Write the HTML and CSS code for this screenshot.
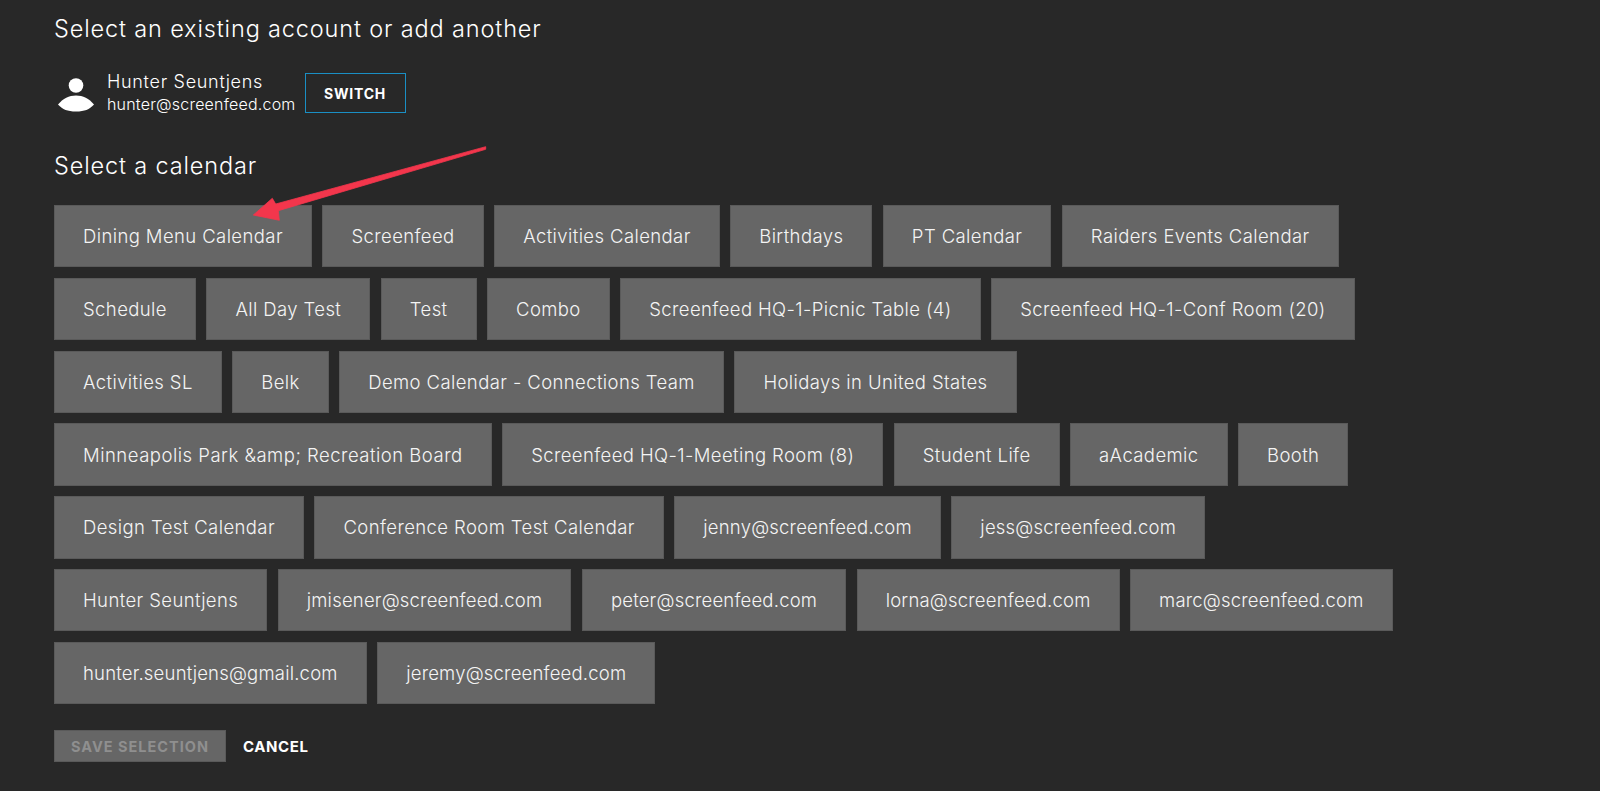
FILE: index.html
```html
<!DOCTYPE html>
<html lang="en">
<head>
<meta charset="utf-8">
<title>Select a calendar</title>
<link rel="stylesheet" href="styles.css">
</head>
<body>
<main class="page">
  <h2 class="title first">Select an existing account or add another</h2>
  <div class="account">
    <svg class="avatar" width="36" height="34" viewBox="0 0 36 34"><circle cx="18" cy="7.500" r="7.300" fill="#fff"/><path d="M0 26.500C5 20.500 11 17.500 18 17.500s13 3 18 9C31 31.500 27 33.500 18 33.500S5 31.500 0 26.500Z" fill="#fff"/></svg>
    <div class="who">
      <div class="name">Hunter Seuntjens</div>
      <div class="email">hunter@screenfeed.com</div>
    </div>
    <button class="switch">SWITCH</button>
  </div>
  <h2 class="title second">Select a calendar</h2>
  <div class="calendars">
    <button class="cal">Dining Menu Calendar</button>
    <button class="cal">Screenfeed</button>
    <button class="cal">Activities Calendar</button>
    <button class="cal">Birthdays</button>
    <button class="cal">PT Calendar</button>
    <button class="cal">Raiders Events Calendar</button>
    <button class="cal">Schedule</button>
    <button class="cal">All Day Test</button>
    <button class="cal">Test</button>
    <button class="cal">Combo</button>
    <button class="cal">Screenfeed HQ-1-Picnic Table (4)</button>
    <button class="cal">Screenfeed HQ-1-Conf Room (20)</button>
    <button class="cal">Activities SL</button>
    <button class="cal">Belk</button>
    <button class="cal">Demo Calendar - Connections Team</button>
    <button class="cal">Holidays in United States</button>
    <button class="cal wide">Minneapolis Park &amp;amp; Recreation Board</button>
    <button class="cal">Screenfeed HQ-1-Meeting Room (8)</button>
    <button class="cal">Student Life</button>
    <button class="cal">aAcademic</button>
    <button class="cal">Booth</button>
    <button class="cal">Design Test Calendar</button>
    <button class="cal">Conference Room Test Calendar</button>
    <button class="cal mail">jenny@screenfeed.com</button>
    <button class="cal mail">jess@screenfeed.com</button>
    <button class="cal">Hunter Seuntjens</button>
    <button class="cal mail">jmisener@screenfeed.com</button>
    <button class="cal mail">peter@screenfeed.com</button>
    <button class="cal mail">lorna@screenfeed.com</button>
    <button class="cal mail">marc@screenfeed.com</button>
    <button class="cal mail">hunter.seuntjens@gmail.com</button>
    <button class="cal mail">jeremy@screenfeed.com</button>
  </div>
  <div class="actions">
    <button class="save" disabled>SAVE SELECTION</button>
    <button class="cancel">CANCEL</button>
  </div>
</main>
<svg class="arrow" width="240" height="80" viewBox="0 0 240 80"><path d="M234.700 0.700L24.700 58L21.300 52.300L2.300 69L28.300 74.300L27.300 64.700L234.700 3.300Z" fill="#f3364c" stroke="#f3364c" stroke-width="0.800" stroke-linejoin="round"/></svg>
</body>
</html>
```
FILE: styles.css
```css
* { box-sizing: border-box; }
html, body { margin: 0; height: 100%; }
body {
  background: #282828;
  color: #fff;
  font-family: Inter, "Noto Sans", sans-serif;
  overflow: hidden;
  position: relative;
}
.page { padding: 15px 0 0 54px; }
.title {
  margin: 0;
  font-size: 23.500px;
  font-weight: 300;
  line-height: 28px;
  letter-spacing: 0.850px;
}
.account {
  display: flex;
  align-items: center;
  margin-top: 28px;
}
.avatar { margin: 4px 13px 0 4px; flex: none; }
.who { margin-right: 9px; }
.name { font-size: 18px; font-weight: 300; line-height: 22px; letter-spacing: 0.700px; }
.email { font-size: 16px; font-weight: 300; line-height: 22px; letter-spacing: 0.200px; }
.switch {
  width: 101px;
  height: 40px;
  background: #282828;
  border: 1px solid #1a8fc4;
  color: #fff;
  font: 700 14px Inter, sans-serif;
  letter-spacing: 0.800px;
  padding: 0;
}
.second { margin-top: 37px; }
.calendars {
  display: flex;
  flex-wrap: wrap;
  gap: 10.400px 10.500px;
  width: 1370px;
  margin-top: 25px;
}
.cal {
  height: 62.400px;
  padding: 0 28px;
  background: #666;
  border: 1px solid #5a5a5a;
  color: #f4f4f4;
  font: 300 18.500px Inter, sans-serif;
  letter-spacing: 0.400px;
  white-space: nowrap;
}
.cal.mail { letter-spacing: 0.200px; }
.cal.wide { letter-spacing: 0.500px; }
.actions {
  display: flex;
  align-items: center;
  margin-top: 26px;
}
.save {
  width: 172px;
  height: 32px;
  background: #666;
  border: 1px solid #5a5a5a;
  color: #8f8f8f;
  font: 700 14.500px Inter, sans-serif;
  letter-spacing: 1px;
  padding: 0;
}
.cancel {
  margin-left: 17px;
  background: none;
  border: 0;
  color: #fff;
  font: 700 15px Inter, sans-serif;
  letter-spacing: 0.600px;
  padding: 0;
}
.arrow { position: absolute; left: 251px; top: 146px; }
```
